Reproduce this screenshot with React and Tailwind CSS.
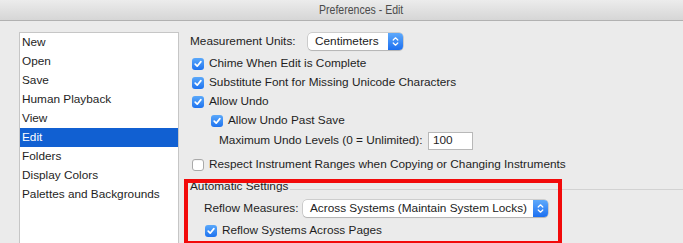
import React from "react";

function CheckBox({ checked }) {
  if (!checked) {
    return (
      <span className="w-[12px] h-[12px] rounded-[3px] bg-white border border-[#a9a9a9] shadow-[inset_0_1px_0_rgba(0,0,0,0.04)] shrink-0" />
    );
  }
  return (
    <span className="w-[12px] h-[12px] rounded-[3px] bg-gradient-to-b from-[#5aa8fa] to-[#1d72ef] flex items-center justify-center shrink-0">
      <svg width="10" height="10" viewBox="0 0 10 10">
        <path
          d="M2.2 5.2 L4.2 7.2 L7.9 2.6"
          fill="none"
          stroke="white"
          strokeWidth="1.7"
          strokeLinecap="round"
          strokeLinejoin="round"
        />
      </svg>
    </span>
  );
}

function Popup({ value, width }) {
  return (
    <div
      className={
        "h-[17px] bg-white rounded-[4px] shadow-[0_0_0_0.5px_rgba(0,0,0,0.25),0_1px_1px_rgba(0,0,0,0.12)] flex items-center " +
        width
      }
    >
      <span className="flex-1 pl-[7px] text-[#222] whitespace-nowrap">
        {value}
      </span>
      <span className="w-[15px] h-[17px] rounded-r-[4px] bg-gradient-to-b from-[#5ea9fb] to-[#1b6ff0] flex items-center justify-center shrink-0">
        <svg width="7" height="11" viewBox="0 0 7 11">
          <path
            d="M1.2 4 L3.5 1.8 L5.8 4 M1.2 7 L3.5 9.2 L5.8 7"
            fill="none"
            stroke="white"
            strokeWidth="1.2"
            strokeLinecap="round"
            strokeLinejoin="round"
          />
        </svg>
      </span>
    </div>
  );
}

function CheckRow({ checked, label, indent }) {
  return (
    <div className={"h-[19px] flex items-center gap-[5px] " + indent}>
      <CheckBox checked={checked} />
      <span>{label}</span>
    </div>
  );
}

const items = [
  "New",
  "Open",
  "Save",
  "Human Playback",
  "View",
  "Edit",
  "Folders",
  "Display Colors",
  "Palettes and Backgrounds",
];

export default function App() {
  return (
    <div className="w-[683px] h-[243px] overflow-hidden bg-[#ebebeb] text-[11.8px] text-[#1e1e1e] font-['Liberation_Sans',Arial,sans-serif]">
      <div className="h-[21px] bg-gradient-to-b from-[#ececec] to-[#d6d6d6] border-b border-[#b1b1b1] flex items-center pl-[319px]">
        <span className="text-[13px] text-[#4b4b4b] scale-x-[0.81] origin-left whitespace-nowrap">
          Preferences - Edit
        </span>
      </div>

      <div className="flex pt-[11px]">
        <div className="ml-[19px] w-[160px] h-[220px] bg-white border border-[#c6c6c6] shrink-0">
          {items.map((item) => (
            <div
              key={item}
              className={
                "h-[19px] flex items-center pl-[2px] " +
                (item === "Edit" ? "bg-[#1160d2] text-white" : "")
              }
            >
              {item}
            </div>
          ))}
        </div>

        <div className="flex-1 pl-[11px] pt-[1px]">
          <div className="h-[17px] flex items-center">
            <span className="w-[118px]">Measurement Units:</span>
            <Popup value="Centimeters" width="w-[95px]" />
          </div>

          <div className="mt-[4px]">
            <CheckRow checked label="Chime When Edit is Complete" indent="pl-[2px]" />
            <CheckRow
              checked
              label="Substitute Font for Missing Unicode Characters"
              indent="pl-[2px]"
            />
            <CheckRow checked label="Allow Undo" indent="pl-[2px]" />
            <CheckRow checked label="Allow Undo Past Save" indent="pl-[21px]" />
          </div>

          <div className="h-[18px] mt-[2px] flex items-center pl-[29px]">
            <span className="w-[209px]">Maximum Undo Levels (0 = Unlimited):</span>
            <div className="w-[45px] h-[18px] bg-white border border-[#b8b8b8] flex items-center pl-[4px]">
              100
            </div>
          </div>

          <div className="mt-[5px]">
            <CheckRow
              label="Respect Instrument Ranges when Copying or Changing Instruments"
              indent="pl-[2px]"
            />
          </div>

          <div className="relative">
            <div className="h-[19px] mt-[3px] flex items-center">
              <span>Automatic Settings</span>
              <div className="flex-1 h-px bg-[#d2d2d2] ml-[2px] mt-[6px]" />
            </div>

            <div className="h-[17px] mt-[4px] flex items-center pl-[14px]">
              <span className="w-[99px]">Reflow Measures:</span>
              <Popup
                value="Across Systems (Maintain System Locks)"
                width="w-[245px]"
              />
            </div>

            <div className="mt-[4px]">
              <CheckRow checked label="Reflow Systems Across Pages" indent="pl-[15px]" />
            </div>

            <div className="absolute left-[-6px] top-[2px] w-[378px] h-[66px] border-[4px] border-[#f20a0a] pointer-events-none" />
          </div>
        </div>
      </div>
    </div>
  );
}
